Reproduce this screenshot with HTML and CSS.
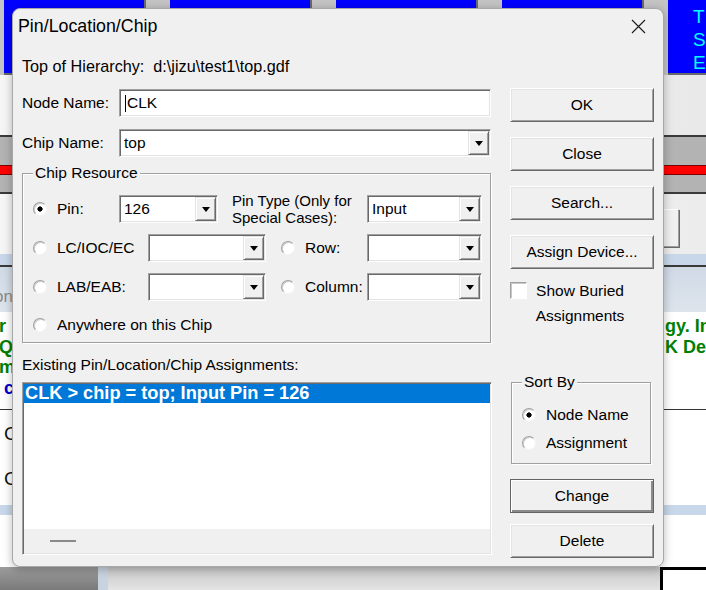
FILE: index.html
```html
<!DOCTYPE html>
<html>
<head>
<meta charset="utf-8">
<link rel="stylesheet" href="styles.css">
</head>
<body>
<div class="app">
  <div class="tabs">
    <div class="tab"></div>
    <div class="tab"></div>
    <div class="tab"></div>
    <div class="tab"></div>
    <div class="tab tab-last"><span>T</span><span>S</span><span>E</span></div>
  </div>
  <div class="b-light"></div>
  <div class="b-dark"></div>
  <div class="b-gray"></div>
  <div class="b-red"></div>
  <div class="b-gray2"></div>
  <div class="b-dark"></div>
  <div class="b-light2"><div class="bgbtn"></div></div>
  <div class="b-blue"></div>
  <div class="b-dark"></div>
  <div class="b-steel"><span class="gray-txt">on</span></div>
  <div class="b-text">
    <div class="ltxt"><div class="g">r</div><div class="g">Q</div><div class="g">m</div><div class="bl">c</div></div>
    <div class="rtxt"><div class="g">gy. In</div><div class="g">K Dev</div></div>
  </div>
  <div class="b-line"></div>
  <div class="b-white"><div class="k">C</div><div class="k k2">C</div></div>
  <div class="b-blue2"></div>
  <div class="b-white2"></div>
  <div class="b-bottom"><div class="bb-dark"></div><div class="bb-strip"></div><div class="bb-light"></div><div class="bb-box"></div></div>

  <div class="dialog">
    <div class="titlebar">
      <span class="title">Pin/Location/Chip</span>
      <span class="close"><svg width="15" height="15" viewBox="0 0 15 15"><path d="M1 1L14 14M14 1L1 14" stroke="#1a1a1a" stroke-width="1.1" fill="none"/></svg></span>
    </div>
    <div class="content">
      <div class="hier">Top of Hierarchy:&nbsp; d:\jizu\test1\top.gdf</div>
      <div class="main">
        <div class="left">
          <div class="field">
            <span class="flabel">Node Name:</span>
            <div class="edit w372"><span class="caret"></span>CLK</div>
          </div>
          <div class="field mt12">
            <span class="flabel">Chip Name:</span>
            <div class="combo w372"><span class="ctext">top</span><span class="arrow"><i></i></span></div>
          </div>
          <div class="group chipgroup">
            <span class="glabel">Chip Resource</span>
            <div class="grow first">
              <span class="radio on"></span>
              <span class="rlabel w62">Pin:</span>
              <div class="combo w99"><span class="ctext">126</span><span class="arrow"><i></i></span></div>
              <span class="pintype">Pin Type (Only for<br>Special Cases):</span>
              <div class="combo w115"><span class="ctext">Input</span><span class="arrow"><i></i></span></div>
            </div>
            <div class="grow">
              <span class="radio"></span>
              <span class="rlabel w91">LC/IOC/EC</span>
              <div class="combo w118"><span class="ctext"></span><span class="arrow"><i></i></span></div>
              <span class="radio r2"></span>
              <span class="rlabel w62">Row:</span>
              <div class="combo w115"><span class="ctext"></span><span class="arrow"><i></i></span></div>
            </div>
            <div class="grow">
              <span class="radio"></span>
              <span class="rlabel w91">LAB/EAB:</span>
              <div class="combo w118"><span class="ctext"></span><span class="arrow"><i></i></span></div>
              <span class="radio r2"></span>
              <span class="rlabel w62">Column:</span>
              <div class="combo w115"><span class="ctext"></span><span class="arrow"><i></i></span></div>
            </div>
            <div class="grow">
              <span class="radio"></span>
              <span class="rlabel">Anywhere on this Chip</span>
            </div>
          </div>
          <div class="existing">Existing Pin/Location/Chip Assignments:</div>
          <div class="listbox">
            <div class="items">
              <div class="item sel">CLK &gt; chip = top; Input Pin = 126</div>
            </div>
            <div class="hscroll"><span class="dash"></span></div>
          </div>
        </div>
        <div class="right">
          <div class="btn">OK</div>
          <div class="btn mt15">Close</div>
          <div class="btn mt15">Search...</div>
          <div class="btn mt15">Assign Device...</div>
          <div class="check-row">
            <span class="checkbox"></span>
            <span class="clabel">Show Buried<br>Assignments</span>
          </div>
          <div class="group sortgroup">
            <span class="glabel">Sort By</span>
            <div class="srow first"><span class="radio on"></span><span class="rlabel">Node Name</span></div>
            <div class="srow"><span class="radio"></span><span class="rlabel">Assignment</span></div>
          </div>
          <div class="btn default btn-change">Change</div>
          <div class="btn btn-delete">Delete</div>
        </div>
      </div>
    </div>
  </div>
</div>
</body>
</html>
```
FILE: styles.css
```css
* { box-sizing: border-box; }
html, body { margin: 0; padding: 0; }
body {
  width: 706px;
  height: 590px;
  overflow: hidden;
  font-family: "Liberation Sans", Arial, sans-serif;
  font-size: 15.5px;
  color: #000;
}
.app {
  position: relative;
  width: 706px;
  height: 590px;
  overflow: hidden;
  background: #fff;
}

/* ---------- background application ---------- */
.tabs {
  height: 75px;
  display: flex;
  gap: 24px;
  padding-left: 4px;
  background: #c4c4c4;
}
.tab {
  flex: 0 0 142px;
  background: #0000ff;
  border-right: 2px solid #6a6a6a;
  border-bottom: 2px solid #6a6a6a;
}
.tab-last {
  flex: 0 0 60px;
  display: flex;
  flex-direction: column;
  padding: 5px 0 0 25px;
  color: #00ffff;
  font-size: 19px;
  line-height: 23px;
}
.b-light { height: 60px; background: linear-gradient(to right, #f6f6f6, #e9e9e9); }
.b-dark { height: 2px; background: #3a3a3a; }
.b-gray { height: 28px; background: #b3b3b3; }
.b-red { height: 10px; background: #ff0000; border-top: 1px solid #7a0000; border-bottom: 1px solid #7a0000; }
.b-gray2 { height: 17px; background: #b3b3b3; }
.b-light2 {
  height: 60px;
  background: linear-gradient(to right, #f6f6f6, #ececec);
  display: flex;
  justify-content: flex-end;
  padding: 15px 27px 0 0;
}
.bgbtn {
  width: 40px;
  height: 38px;
  background: #f0f0f0;
  border: 1px solid #a0a0a0;
  border-top-color: #fff;
  border-left-color: #fff;
  box-shadow: 1px 1px 0 #6a6a6a;
}
.b-blue { height: 11px; background: #c8d8ea; }
.b-steel {
  height: 45px;
  background: linear-gradient(to bottom, #d0dae6, #dde4ec);
  padding-top: 20px;
  font-size: 17px;
  line-height: 20px;
}
.gray-txt { color: #8a8a8a; margin-left: -6px; }
.b-text {
  height: 97px;
  display: flex;
  justify-content: space-between;
  padding-top: 4px;
  font-size: 18px;
  font-weight: bold;
  line-height: 20.5px;
}
.ltxt { margin-left: -1px; }
.rtxt { width: 42px; padding-left: 1px; overflow: hidden; white-space: nowrap; }
.g { color: #008000; }
.bl { color: #0000cc; padding-left: 5px; }
.b-line { height: 1px; background: #333; }
.b-white { height: 95px; padding-top: 13px; font-size: 19px; line-height: 22px; }
.k { padding-left: 4px; color: #111; }
.k2 { margin-top: 23px; }
.b-blue2 { height: 10px; background: #c8d8ea; }
.b-white2 { height: 52px; background: #fff; }
.b-bottom { height: 23px; display: flex; }
.bb-dark { width: 98px; background: linear-gradient(to bottom, #9c9c9c, #7a7a7a); }
.bb-strip { width: 10px; background: #c7d3df; }
.bb-light { width: 552px; background: linear-gradient(to bottom, #c6c6c6, #e4e4e4); }
.bb-box { flex: 1; background: #fff; border-left: 3px solid #000; border-top: 3px solid #000; }

/* ---------- dialog ---------- */
.dialog {
  position: absolute;
  left: 12px;
  top: 8px;
  width: 652px;
  height: 559px;
  background: #f0f0f0;
  border: 1px solid #a8a8a8;
  border-radius: 8px;
  box-shadow: 0 2px 10px rgba(0, 0, 0, 0.28);
}
.titlebar {
  height: 35px;
  display: flex;
  align-items: center;
  justify-content: space-between;
  padding-left: 5px;
}
.title { font-size: 17.8px; }
.close { width: 50px; display: flex; justify-content: center; align-items: center; }
.content { padding: 0 9px; }
.hier { margin-top: 12px; line-height: 20px; height: 20px; white-space: nowrap; font-size: 16.2px; }
.main {
  margin-top: 12px;
  display: grid;
  grid-template-columns: 470px 144px;
  column-gap: 18px;
}
.left { display: flex; flex-direction: column; }
.field { display: flex; align-items: center; height: 28px; margin-top: 1px; }
.mt12 { margin-top: 12px; }
.mt15 { margin-top: 15px; }
.flabel { width: 97px; }

/* sunken controls */
.edit, .combo {
  height: 28px;
  background: #fff;
  border: 1px solid;
  border-color: #a0a0a0 #ffffff #ffffff #a0a0a0;
  box-shadow: inset 1px 1px 0 #696969, inset -1px -1px 0 #e3e3e3;
  display: flex;
  align-items: center;
}
.edit { padding-left: 5px; }
.caret { width: 1px; height: 17px; background: #000; margin-right: 1px; }
.combo { flex: none; }
.ctext { flex: 1; padding-left: 4px; }
.arrow {
  width: 21px;
  height: 24px;
  margin: 1px;
  background: #f0f0f0;
  border: 1px solid;
  border-color: #e3e3e3 #696969 #696969 #e3e3e3;
  box-shadow: inset 1px 1px 0 #fff, inset -1px -1px 0 #a0a0a0;
  display: flex;
  align-items: center;
  justify-content: center;
}
.arrow i {
  display: block;
  width: 0;
  height: 0;
  border-left: 4.5px solid transparent;
  border-right: 4.5px solid transparent;
  border-top: 5px solid #000;
  margin-top: 1px;
}
.w372 { width: 372px; }
.w99 { width: 99px; }
.w115 { width: 115px; }
.w118 { width: 118px; }

/* group boxes */
.group {
  border: 1px solid #a0a0a0;
  box-shadow: inset 1px 1px 0 #fff, 1px 1px 0 #fff;
}
.glabel {
  display: block;
  width: fit-content;
  margin: -10px 0 0 10px;
  padding: 0 2px;
  line-height: 18px;
  background: #f0f0f0;
}
.chipgroup { margin-top: 16px; width: 469px; height: 170px; }
.grow { display: flex; align-items: center; height: 28px; margin-top: 11px; padding-left: 10px; }
.grow.first { margin-top: 13px; }
.grow:last-child { margin-top: 10px; }
.rlabel { white-space: nowrap; }
.w62 { width: 62px; }
.w91 { width: 91px; }
.pintype { width: 135px; margin-left: 14px; font-size: 15px; line-height: 17px; white-space: nowrap; }

.radio {
  flex: none;
  width: 14px;
  height: 14px;
  margin-right: 10px;
  border-radius: 50%;
  background: #fff;
  border: 1px solid;
  border-color: #a0a0a0 #f4f4f4 #f4f4f4 #a0a0a0;
  box-shadow: inset 1px 1px 0 #d0d0d0;
}
.radio.on { background: radial-gradient(circle, #000 0, #000 2.3px, #fff 2.9px); }
.r2 { margin-left: 15px; }

.existing { margin-top: 12px; line-height: 20px; white-space: nowrap; }
.listbox {
  margin-top: 7px;
  height: 173px;
  background: #fff;
  border: 1px solid;
  border-color: #a0a0a0 #ffffff #ffffff #a0a0a0;
  box-shadow: inset 1px 1px 0 #696969, inset -1px -1px 0 #e3e3e3;
  padding: 1px;
  display: flex;
  flex-direction: column;
}
.items { height: 145px; }
.item {
  height: 19px;
  line-height: 19px;
  font-size: 18.2px;
  font-weight: bold;
  padding-left: 1px;
  white-space: nowrap;
}
.item.sel { background: #0078d7; color: #fff; }
.hscroll {
  height: 24px;
  background: #f0f0f0;
  display: flex;
  align-items: center;
  padding-left: 26px;
}
.dash { width: 26px; height: 2px; background: #8a8a8a; }

/* right column */
.right { display: flex; flex-direction: column; }
.btn {
  height: 34px;
  display: flex;
  align-items: center;
  justify-content: center;
  background: #f0f0f0;
  border: 1px solid;
  border-color: #ffffff #696969 #696969 #ffffff;
  box-shadow: inset 1px 1px 0 #e3e3e3, inset -1px -1px 0 #a0a0a0;
  white-space: nowrap;
}
.btn.default {
  border-color: #646464;
  box-shadow: inset 1px 1px 0 #fff, inset -2px -2px 0 #8a8a8a;
}
.btn-change { margin-top: 15px; }
.btn-delete { margin-top: 11px; }
.check-row { display: flex; align-items: flex-start; margin-top: 9px; }
.checkbox {
  flex: none;
  width: 17px;
  height: 17px;
  margin-top: 4px;
  background: #fff;
  border: 1px solid;
  border-color: #a0a0a0 #fff #fff #a0a0a0;
  box-shadow: inset 1px 1px 0 #c8c8c8;
}
.clabel { width: 100px; margin-left: 3px; text-align: center; line-height: 25px; }
.sortgroup { margin-top: 54px; margin-left: 1px; width: 140px; height: 82px; }
.srow { display: flex; align-items: center; height: 28px; padding-left: 10px; }
.srow .radio { margin-right: 10px; }
.srow.first { margin-top: 10px; }
```
